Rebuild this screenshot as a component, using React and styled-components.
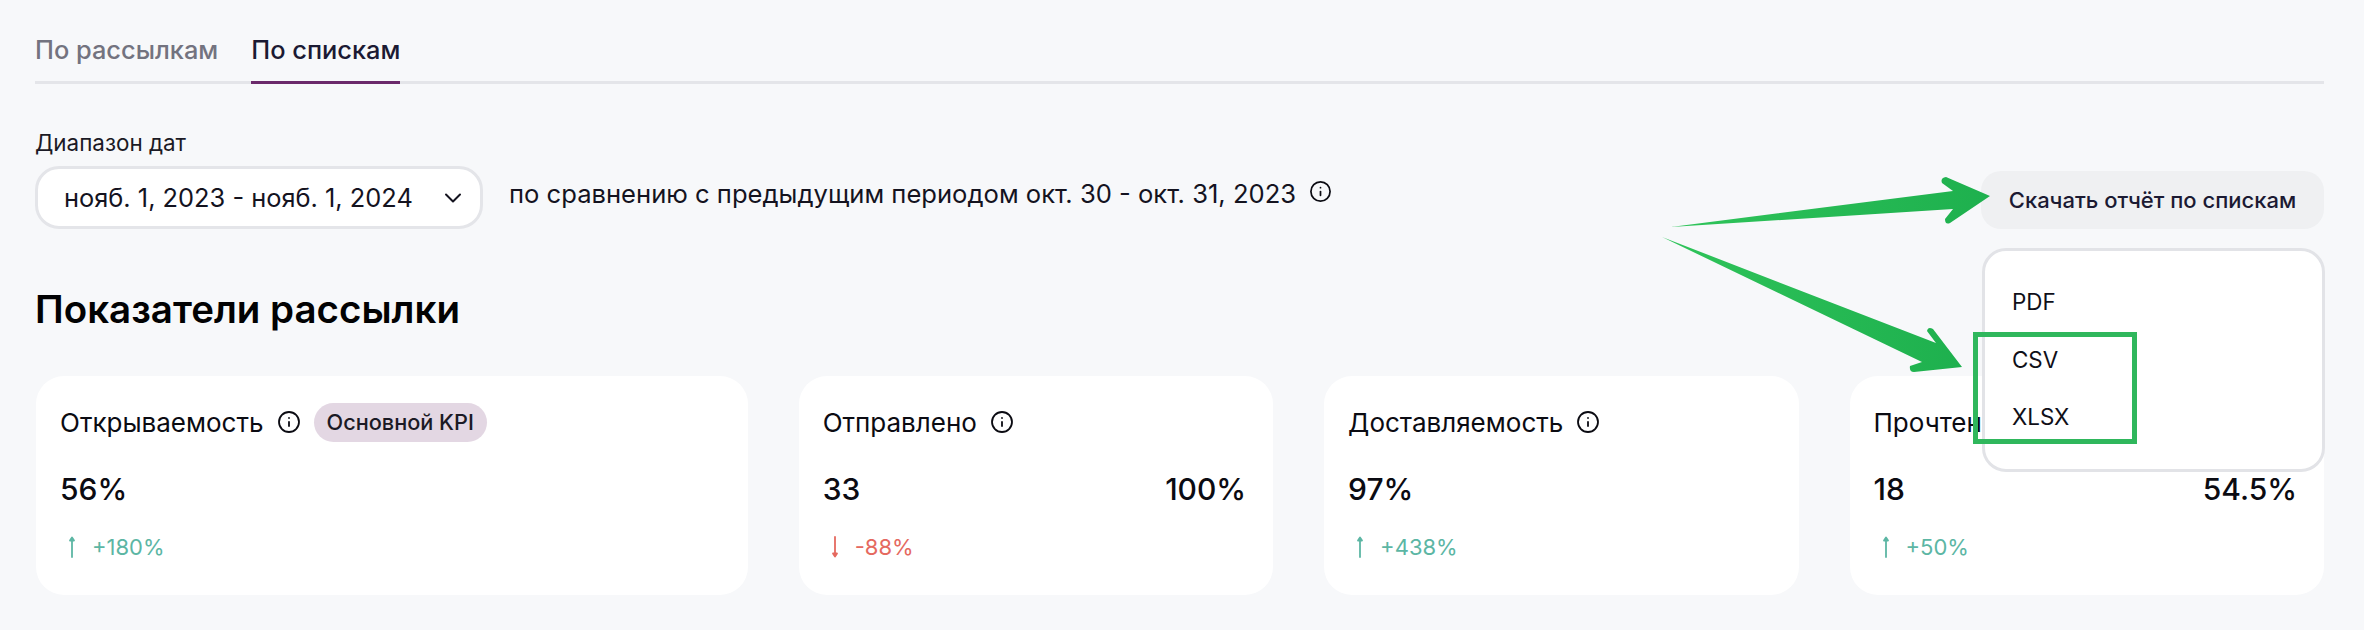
import React from 'react';
import styled, { createGlobalStyle } from 'styled-components';
import { ChevronDown, Info } from 'lucide-react';

const Global = createGlobalStyle`
  html, body { margin: 0; padding: 0; background: #f7f8fa; }
  * { box-sizing: border-box; }
  body { font-family: Inter, "Liberation Sans", sans-serif; color: #0b0b12; }
`;

const Page = styled.div`
  position: relative;
  width: 2364px;
  height: 630px;
  overflow: hidden;
  padding: 30px 40px 0 36px;
  background: #f7f8fa;
`;

const Tabs = styled.div`
  display: flex;
  gap: 33px;
  height: 54px;
  margin-left: -1px;
  border-bottom: 3px solid #e4e5e9;
`;

const Tab = styled.div`
  height: 54px;
  font-size: 25.4px;
  font-weight: 500;
  line-height: 40px;
  color: ${p => (p.$active ? '#1b1a33' : '#73737f')};
  border-bottom: 3px solid ${p => (p.$active ? '#6b2a6b' : 'transparent')};
`;

const FilterRow = styled.div`
  display: flex;
  justify-content: space-between;
  align-items: flex-start;
  margin-top: 46px;
`;

const FilterLeft = styled.div`
  display: flex;
  flex-direction: column;
  gap: 10px;
`;

const Label = styled.div`
  font-size: 22.4px;
  line-height: 26px;
  margin-left: -1px;
  color: #1b1a25;
`;

const DateControls = styled.div`
  display: flex;
  align-items: flex-start;
  gap: 26px;
  margin-left: -1px;
`;

const Select = styled.div`
  width: 448px;
  height: 63px;
  display: flex;
  align-items: center;
  justify-content: space-between;
  padding: 0 13px 0 26px;
  background: #fff;
  border: 3px solid #e4e5e9;
  border-radius: 24px;
  font-size: 25.4px;
  color: #14131f;
`;

const Compare = styled.div`
  display: flex;
  align-items: flex-start;
  gap: 13px;
  font-size: 25.6px;
  line-height: 30px;
  padding-top: 13px;
  color: #14131f;
`;

const InfoWrap = styled.span`
  display: inline-flex;
  flex: none;
  margin-top: ${p => p.$top || 0}px;
`;

const Download = styled.div`
  position: relative;
  width: 343px;
`;

const DownloadButton = styled.div`
  margin-top: 41px;
  height: 58px;
  display: flex;
  align-items: center;
  justify-content: center;
  background: #eff0f2;
  border-radius: 20px;
  font-size: 22px;
  font-weight: 500;
  color: #1b1a33;
  white-space: nowrap;
`;

const Menu = styled.div`
  position: absolute;
  z-index: 2;
  top: 118px;
  left: 1px;
  width: 343px;
  height: 224px;
  padding: 36px 0 0 27px;
  background: #fff;
  border: 3px solid #e2e3e7;
  border-radius: 24px;
  display: flex;
  flex-direction: column;
  gap: 28.5px;
`;

const MenuItem = styled.div`
  font-size: 22.4px;
  line-height: 29px;
  color: #0f0f18;
`;

const Heading = styled.h2`
  margin: 58px 0 0 -1px;
  font-size: 38.5px;
  line-height: 44px;
  font-weight: 600;
  color: #020203;
`;

const Cards = styled.div`
  display: grid;
  grid-template-columns: 1.5fr 1fr 1fr 1fr;
  gap: 51px;
  margin-top: 45px;
`;

const Card = styled.div`
  height: 219px;
  padding: 27px 27px 0 24px;
  background: #fff;
  border-radius: 28px;
  display: flex;
  flex-direction: column;
`;

const CardTitle = styled.div`
  display: flex;
  align-items: center;
  height: 38px;
  gap: 13px;
  font-size: 26px;
  color: #0b0b12;
  white-space: nowrap;
`;

const Badge = styled.span`
  height: 39px;
  display: inline-flex;
  align-items: center;
  padding: 0 13px;
  border-radius: 20px;
  background: #e3d7e3;
  font-size: 21.7px;
  font-weight: 500;
  color: #1b1a25;
`;

const Values = styled.div`
  display: flex;
  justify-content: space-between;
  margin-top: 29px;
  font-size: 30px;
  line-height: 38px;
  font-weight: 500;
  color: #0b0b12;
`;

const Delta = styled.div`
  display: flex;
  align-items: center;
  gap: 14px;
  margin-top: 26px;
  padding-left: 6px;
  font-size: 22px;
  line-height: 26px;
  color: ${p => (p.$down ? '#e5695f' : '#5cb6a4')};
`;

const Overlay = styled.svg`
  position: absolute;
  left: 0;
  top: 0;
  z-index: 3;
  pointer-events: none;
`;

const Highlight = styled.div`
  position: absolute;
  z-index: 4;
  left: 1973px;
  top: 332px;
  width: 164px;
  height: 112px;
  border: 5px solid #2fb75c;
`;

const InfoIcon = ({ top, size = 24 }) => (
  <InfoWrap $top={top}>
    <Info size={size} strokeWidth={1.8} color="#0b0b12" />
  </InfoWrap>
);

const Arrow = ({ down }) => (
  <svg width="12" height="22" viewBox="0 0 12 22" fill="currentColor" stroke="currentColor" strokeWidth="1.8" strokeLinecap="round" strokeLinejoin="round">
    {down ? (
      <>
        <path d="M6 1v18" fill="none" />
        <path d="M4 17.5L6 20.5L8 17.5Z" />
      </>
    ) : (
      <>
        <path d="M6 21V3" fill="none" />
        <path d="M4 4.5L6 1.5L8 4.5Z" />
      </>
    )}
  </svg>
);

const data = [
  { title: 'Открываемость', badge: 'Основной KPI', value: '56%', delta: '+180%' },
  { title: 'Отправлено', value: '33', right: '100%', delta: '-88%', down: true },
  { title: 'Доставляемость', value: '97%', delta: '+438%' },
  { title: 'Прочтено', value: '18', right: '54.5%', delta: '+50%' },
];

export default function App() {
  return (
    <Page>
      <Global />
      <Tabs>
        <Tab>По рассылкам</Tab>
        <Tab $active>По спискам</Tab>
      </Tabs>
      <FilterRow>
        <FilterLeft>
          <Label>Диапазон дат</Label>
          <DateControls>
            <Select>
              <span>нояб. 1, 2023 - нояб. 1, 2024</span>
              <ChevronDown size={28} strokeWidth={1.7} color="#14131f" />
            </Select>
            <Compare>
              <span>по сравнению с предыдущим периодом окт. 30 - окт. 31, 2023</span>
              <InfoIcon top={1} size={23} />
            </Compare>
          </DateControls>
        </FilterLeft>
        <Download>
          <DownloadButton>Скачать отчёт по спискам</DownloadButton>
          <Menu>
            <MenuItem>PDF</MenuItem>
            <MenuItem>CSV</MenuItem>
            <MenuItem>XLSX</MenuItem>
          </Menu>
        </Download>
      </FilterRow>
      <Heading>Показатели рассылки</Heading>
      <Cards>
        {data.map(c => (
          <Card key={c.title}>
            <CardTitle>
              {c.title}
              <InfoIcon />
              {c.badge && <Badge>{c.badge}</Badge>}
            </CardTitle>
            <Values>
              <span>{c.value}</span>
              {c.right && <span>{c.right}</span>}
            </Values>
            <Delta $down={c.down}>
              <Arrow down={c.down} />
              {c.delta}
            </Delta>
          </Card>
        ))}
      </Cards>
      <Overlay width="2364" height="630" viewBox="0 0 2364 630">
        <defs>
          <linearGradient id="g" x1="0" y1="0" x2="1" y2="0">
            <stop offset="0" stopColor="#2fc45a" />
            <stop offset="1" stopColor="#1eb04e" />
          </linearGradient>
        </defs>
        <path
          d="M1671 227 L1953 191 L1942 183 Q1940 178 1946 177 L1990 196 L1950 223 Q1945 225 1945 219 L1953 209 Z"
          fill="url(#g)"
        />
        <path
          d="M1662 237 L1936 343 L1927 331 Q1928 326 1933 329 L1962 367 L1914 372 Q1909 372 1910 366 L1922 362 Z"
          fill="url(#g)"
        />
      </Overlay>
      <Highlight />
    </Page>
  );
}
